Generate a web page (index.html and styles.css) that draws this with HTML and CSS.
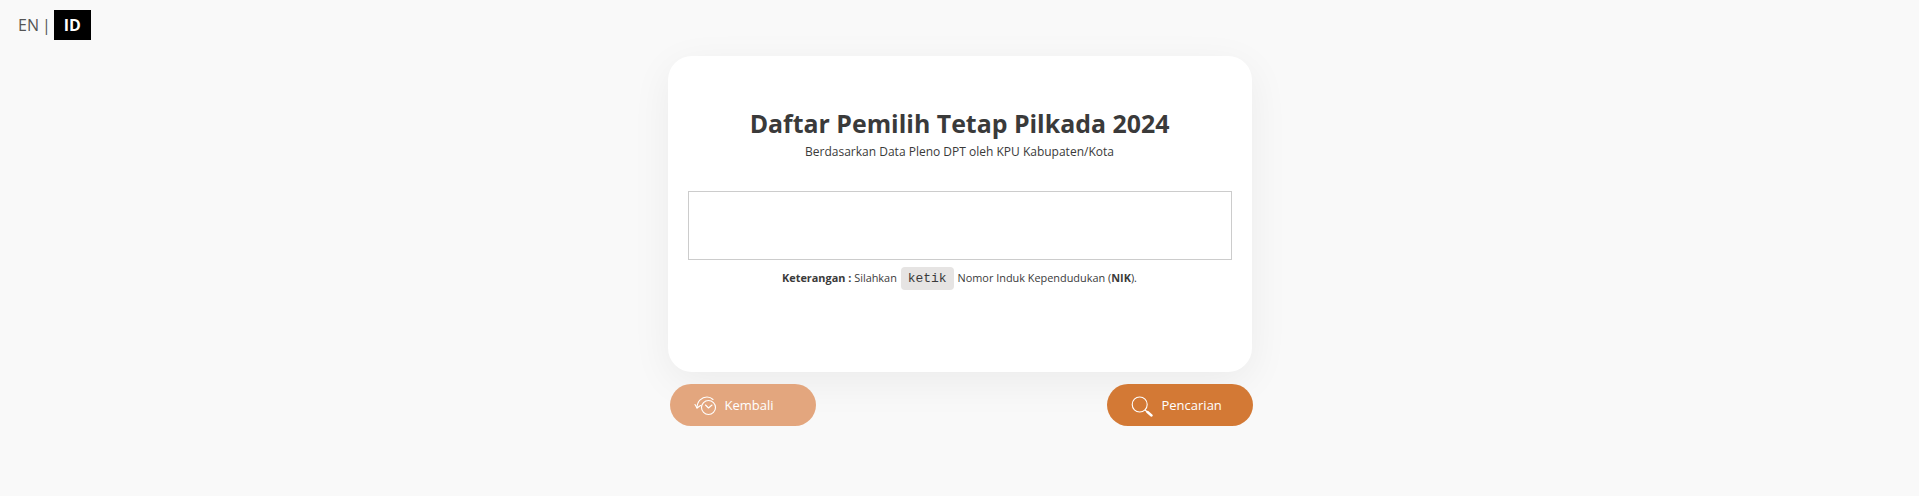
FILE: index.html
```html
<!DOCTYPE html>
<html lang="id">
<head>
  <meta charset="UTF-8" />
  <title>Daftar Pemilih Tetap Pilkada 2024</title>
  <link rel="stylesheet" href="styles.css">
</head>
<body>

  <div class="lang">
    <span class="lang-en">EN</span>
    <span class="lang-sep">|</span>
    <span class="lang-id">ID</span>
  </div>

  <div class="wrapper">
    <div class="card">
      <h1>Daftar Pemilih Tetap Pilkada 2024</h1>
      <p class="subtitle">Berdasarkan Data Pleno DPT oleh KPU Kabupaten/Kota</p>
      <input class="nik" type="text" />
      <p class="note"><b>Keterangan :</b> Silahkan <code>ketik</code> Nomor Induk Kependudukan (<b>NIK</b>).</p>
    </div>

    <div class="actions">
      <button class="btn btn-back" type="button">
        <svg width="24" height="24" viewBox="0 0 24 24" fill="none" stroke="currentColor" stroke-width="1.1" stroke-linecap="round" stroke-linejoin="round">
          <circle cx="14.5" cy="14.5" r="7"/>
          <path d="M14.5 15l-3-3M14.5 15l3.5-3"/>
          <path d="M3 15C3 8 8 4 13 4c2.500 0 4.500 1 6 2.500"/>
          <path d="M1 11.500l2 3.500 3.500-2.500"/>
        </svg>
        Kembali
      </button>
      <button class="btn btn-search" type="button">
        <svg width="24" height="24" viewBox="0 0 24 24" fill="none" stroke="currentColor" stroke-width="1.1" stroke-linecap="round">
          <circle cx="8.7" cy="11.500" r="7.500"/>
          <path d="M14.200 17l2 2"/>
          <path d="M16.500 19l4 3.500" stroke-width="2.400"/>
        </svg>
        Pencarian
      </button>
    </div>
  </div>

</body>
</html>
```

FILE: styles.css
```css
/* Estilos gerais */
body {
  font-family: "Open Sans", Arial, sans-serif;
  background-color: #f9f9f9;
  color: #3a3a3a;
  margin: 0;
  height: 496px;
  overflow: hidden;
}

/* Language switch */
.lang {
  display: flex;
  align-items: center;
  gap: 3px;
  height: 30px;
  padding: 10px 0 0 18px;
  font-size: 16px;
  color: #555;
}

.lang-id {
  background: #000;
  color: #fff;
  font-weight: 700;
  padding: 0 10px;
  line-height: 30px;
}

/* Main column */
.wrapper {
  width: 584px;
  margin: 16px auto 0;
}

.card {
  box-sizing: border-box;
  height: 316px;
  padding: 50px 20px 0;
  background: #fff;
  border-radius: 24px;
  box-shadow: 0 10px 40px rgba(0,0,0,0.06);
  text-align: center;
}

h1 {
  margin: 0;
  font-size: 24.9px;
  line-height: 34px;
  font-weight: 700;
}

.subtitle {
  margin: 2px 0 29px;
  font-size: 12px;
  line-height: 20px;
}

.nik {
  display: block;
  box-sizing: border-box;
  width: 100%;
  height: 69px;
  border: 1px solid #ccc;
  background: #fff;
  outline: none;
}

.note {
  margin: 7px 0 0;
  font-size: 10.9px;
  line-height: 22px;
}

code {
  font-family: "Liberation Mono", monospace;
  font-size: 13px;
  background: #e6e4e3;
  border-radius: 4px;
  padding: 4px 7px;
  margin: 0 1px;
}

/* Buttons */
.actions {
  display: flex;
  justify-content: space-between;
  margin: 12px -1px 0 2px;
}

.btn {
  display: flex;
  align-items: center;
  gap: 7px;
  width: 146px;
  height: 42px;
  padding: 0 0 0 24px;
  border: none;
  border-radius: 21px;
  color: #fff;
  font-family: inherit;
  font-size: 13px;
  cursor: pointer;
}

.btn-back {
  background-color: #e3a67e;
}

.btn-search {
  background-color: #d37935;
}
```
